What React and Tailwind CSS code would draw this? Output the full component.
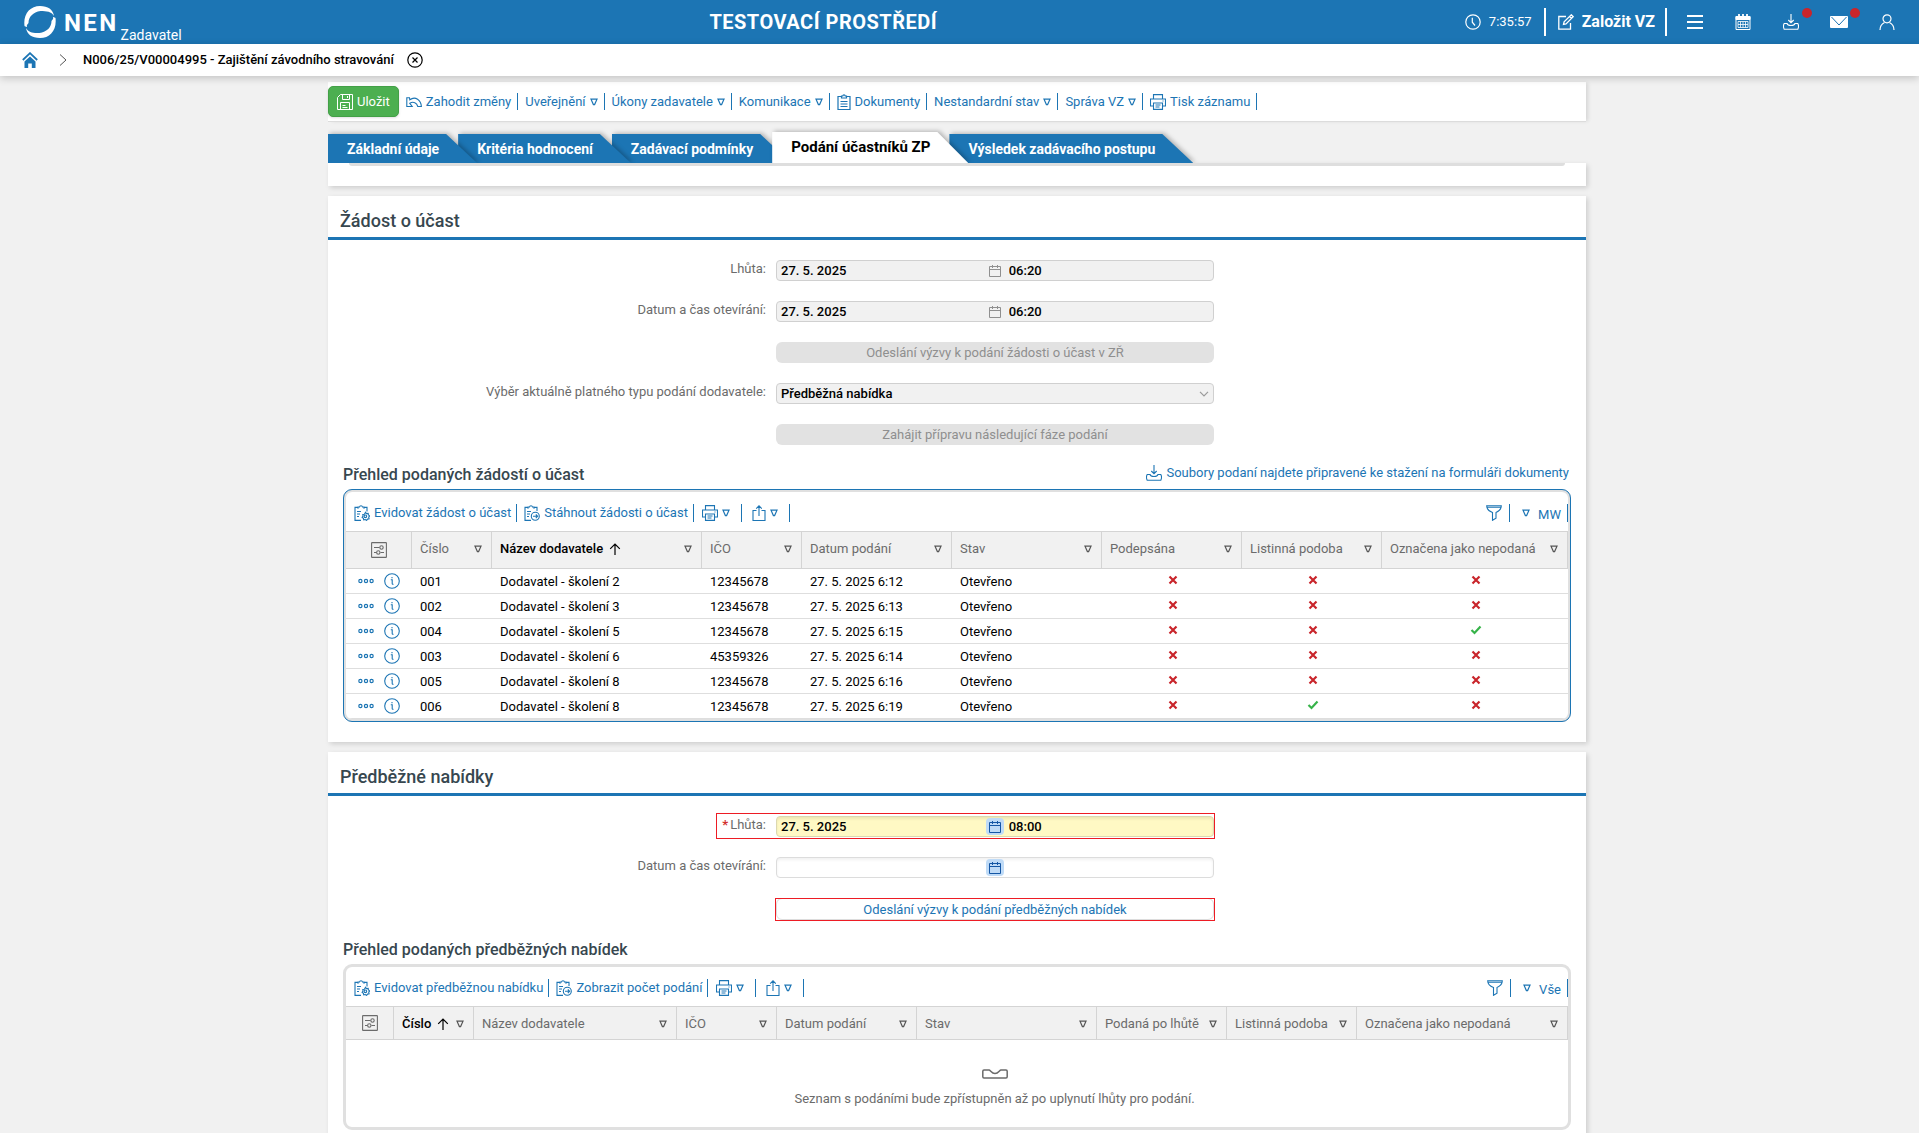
import React from 'react';

const Svg = ({ w = 16, h = 16, box, children, className = '', sw = 1 }) => (
  <svg
    width={w}
    height={h}
    viewBox={box || `0 0 ${w} ${h}`}
    fill="none"
    stroke="currentColor"
    strokeWidth={sw}
    aria-hidden="true"
    className={`shrink-0 ${className}`}
  >
    {children}
  </svg>
);

const Tri = () => (
  <Svg w={8} h={8} sw={1.2}>
    <path d="M1 1.2h6L4.6 6.6h-1.2z" />
  </Svg>
);

const LogoIcon = () => (
  <Svg w={32} h={32} box="0 0 32 32" sw={0}>
    <path
      fill="#fff"
      fillRule="evenodd"
      d="M16 0C24 0 29 3.500 30 10C27.500 5.500 22.500 5 16.500 5C9 6 4.500 11 4.500 17C3 19 1.500 21 .5 20C-1 8 6 0 16 0Z"
    />
    <path
      fill="#fff"
      d="M16 32C8 32 3 28.500 2 22C4.500 26.500 9.500 27.500 15.500 27C23 26 27.500 21 27.500 15C29 13 30.500 11 31.500 12C33 24 26 32 16 32Z"
    />
    <path stroke="#fff" strokeWidth="1.300" d="M2.200 21C1.500 11 7 4.500 16 4.200M29.800 11C30.500 21 25 27.500 16 27.800" />
  </Svg>
);

const HomeIcon = () => (
  <Svg className="text-[#1c75b4]" sw={1.8}>
    <path d="M.8 8 8 1.200l7.200 6.800" />
    <path d="M2.500 9.500 8 4.500l5.500 5V16H9.800v-4.500H6.200V16H2.500z" fill="currentColor" stroke="none" />
  </Svg>
);

const ChevronRight = () => (
  <Svg w={8} h={12} className="text-[#555]">
    <path d="m1 .5 6 5.500-6 5.500" />
  </Svg>
);

const SaveIcon = () => (
  <Svg>
    <path d="M3.500.5h12v15H.5v-12z" />
    <path d="M5.500.5v5h7v-5M10.500 2v2M3.500 15.500v-7h9v7M5.500 11.500h3M5.500 13.500h5" />
  </Svg>
);

const UndoIcon = () => (
  <Svg sw={1.1}>
    <path d="M3.500 3.700H.8v8.800h5.400L3.800 9.300C7.500 7 10.800 9 11.800 12.500h3.600C15 6.500 9.500 1.500 3.800 5.800z" />
  </Svg>
);

const DocIcon = () => (
  <Svg w={14} sw={1.2}>
    <path d="M4 2.500H1v13h12v-13h-3" />
    <path d="M4.500 4V2h1.200C6 .4 8 .4 8.300 2h1.200v2z" />
    <path d="M3.500 7.500h7M3.500 10h7M3.500 12.500h7" />
  </Svg>
);

const PrintIcon = () => (
  <Svg sw={1.1}>
    <path d="M3.500 5V.6h9V5M3.500 12h-3V5h15v7h-3" />
    <path d="M3.500 9h9v6.400h-9zM5.500 11h5M5.500 13h4M12.500 7h1" />
  </Svg>
);

const ShareIcon = () => (
  <Svg w={14} sw={1.1}>
    <path d="M4.500 5.500H1v10h12v-10H9.500M7 11V1M4.200 3.600 7 .8l2.800 2.800" />
  </Svg>
);

const ClipGear = () => (
  <Svg sw={1.1}>
    <path d="M7 15.400H1v-13h2.500M10.500 2.400h2.500v4M4 3.700V2h1.500C5.800.3 8.200.3 8.500 2H10v1.700M3 6.500h4M3 9h3M3 11.500h2" />
    <path d="m11.500 7.300 1 1.300 1.700-.2.200 1.600 1.300.9-1 1.300.4 1.600-1.600.3-.9 1.300-1.300-.9-1.600.4-.3-1.600-1.300-1 .9-1.300-.2-1.600 1.600-.2z" />
    <circle cx="11.400" cy="11.300" r="1.300" />
  </Svg>
);

const ClipArrow = () => (
  <Svg sw={1.1}>
    <path d="M7 15.400H1v-13h2.500M10.500 2.400h2.500v3.500M4 3.700V2h1.500C5.800.3 8.200.3 8.500 2H10v1.700M3 6.500h4M3 9h3M3 11.500h2" />
    <circle cx="11.300" cy="11.300" r="4" />
    <path d="M9 11.300h4.400M11.800 9.500l1.800 1.800-1.800 1.800" />
  </Svg>
);

const Funnel = () => (
  <Svg sw={1.1}>
    <path d="M.7.800h14.600c0 3.200-2.500 5.500-5.300 6.700v5.800l-3.500 2V7.500C3.200 6.300.7 4 .7.800zM1.200 2.200h13.600" />
  </Svg>
);

const Download = () => (
  <Svg sw={1.1}>
    <path d="M8 0v8.500M5.300 6 8 8.700 10.700 6" />
    <path d="M4 9.500H1.200c-.8 1.300-.8 4 0 5.800h13.600c.8-1.800.8-4.500 0-5.800H12c-.8 2.700-7.200 2.700-8 0z" />
  </Svg>
);

const DateIcon = () => (
  <Svg w={12} h={12} sw={1}>
    <path d="M.5 1.500h11v10H.5zM.5 4.500h11M3.500 0v3M8.500 0v3" />
  </Svg>
);

const Columns = () => (
  <Svg sw={1.1}>
    <rect x=".6" y=".6" width="14.800" height="14.800" rx=".5" />
    <path d="M3 5.500h5.500M3 10.500h2.500M9.500 10.500H13" />
    <circle cx="10.500" cy="5.500" r="1.700" />
    <circle cx="7.300" cy="10.500" r="1.700" />
  </Svg>
);

const SortUp = () => (
  <Svg w={12} h={12} sw={1.2}>
    <path d="M6 12V1M1.200 5.800 6 1l4.800 4.800" />
  </Svg>
);

const Dots = () => (
  <Svg w={16} h={6} sw={1.2}>
    <circle cx="2.400" cy="3" r="1.600" />
    <circle cx="8" cy="3" r="1.600" />
    <circle cx="13.600" cy="3" r="1.600" />
  </Svg>
);

const Info = () => (
  <Svg sw={1.1}>
    <circle cx="8" cy="8" r="7.300" />
    <path d="M6.800 6.800h1.400v3.700c0 .8.500.9 1.300.7M8 4v1.300" />
  </Svg>
);

const Cross = () => (
  <Svg w={10} h={10} sw={2.2} className="text-[#c9252b]">
    <path d="m1.500 1.500 7 7M8.500 1.500l-7 7" />
  </Svg>
);

const Check = () => (
  <Svg w={12} h={10} sw={2.2} className="text-[#37b34a]">
    <path d="m1.500 5 3 3 6-6.500" />
  </Svg>
);

const Sep = ({ tall }) => <span className={`w-px shrink-0 bg-[#1c75b4] ${tall ? 'h-[18px]' : 'h-[17px]'}`} />;

const HeaderIcon = ({ label, dot, children }) => (
  <button type="button" aria-label={label} className="relative flex h-9 w-12 items-center justify-center">
    {children}
    {dot && <span className="absolute right-[3px] top-1 size-[10px] rounded-full bg-[#c9252b]" />}
  </button>
);

const Header = () => (
  <header className="flex h-11 shrink-0 bg-[#1c75b4] text-white">
    <a href="#uvod" className="flex items-start pl-6 pt-[6px]">
      <LogoIcon />
      <span className="ml-2 text-2xl font-bold leading-[34px] tracking-widest">NEN</span>
      <span className="ml-[2px] mt-5 text-sm leading-[18px]">Zadavatel</span>
    </a>
    <div className="flex-1 self-center text-center text-xl font-bold tracking-wide">TESTOVACÍ PROSTŘEDÍ</div>
    <div className="flex items-center justify-end pr-2">
      <Svg sw={1.2}>
        <circle cx="8" cy="8" r="7.200" />
        <path d="M7.300 3.800v4.400l2.700 3.300" />
      </Svg>
      <span className="ml-2 text-[13px]">7:35:57</span>
      <span className="ml-3 h-7 w-[2px] bg-white" />
      <button type="button" className="flex items-center gap-2 pl-3 pr-[10px] text-base font-bold">
        <Svg sw={1.3}>
          <path d="M8 2.500H.8v12.700h11.700V9" />
          <path d="m5.500 10.500.6-2.700L13.300.8l1.900 1.900L8 9.900zM11.500 2.500l1.900 1.900" />
        </Svg>
        Založit VZ
      </button>
      <span className="mr-1 h-7 w-[2px] bg-white" />
      <HeaderIcon label="Menu">
        <Svg sw={2}>
          <path d="M0 2h16M0 8h16M0 14h16" />
        </Svg>
      </HeaderIcon>
      <HeaderIcon label="Kalendář">
        <Svg sw={1}>
          <path d="M1 2.500h14v13H1zM1 4h14M1 5h14" />
          <path d="M1 2.500h14v3H1z" fill="currentColor" />
          <path d="M4 0v3.500M8 0v3.500M12 0v3.500" strokeWidth="1.800" />
          <path d="M3 7.500h10v6H3zM3 10.500h10M5.500 7.500v6M8 7.500v6M10.500 7.500v6" strokeWidth=".8" />
        </Svg>
      </HeaderIcon>
      <HeaderIcon label="Stahování" dot>
        <Download />
      </HeaderIcon>
      <HeaderIcon label="Zprávy" dot>
        <Svg w={18} h={12}>
          <rect width="18" height="12" rx="1" fill="#fff" stroke="none" />
          <path d="m1.500 1 7.500 8 7.500-8" stroke="#1c75b4" />
        </Svg>
      </HeaderIcon>
      <HeaderIcon label="Uživatel">
        <Svg sw={1.2}>
          <circle cx="8" cy="4.800" r="4" />
          <path d="M1 16c0-4 2.500-6.500 4.500-7.500M15 16c0-4-2.500-6.500-4.500-7.500" />
        </Svg>
      </HeaderIcon>
    </div>
  </header>
);

const Breadcrumb = () => (
  <nav className="relative z-10 flex h-8 shrink-0 items-center bg-white pl-[22px] shadow-[0_2px_8px_rgba(0,0,0,0.2)]">
    <a href="#domu" aria-label="Domů">
      <HomeIcon />
    </a>
    <span className="ml-[21px] mr-4">
      <ChevronRight />
    </span>
    <span className="text-[13px] font-medium">N006/25/V00004995 - Zajištění závodního stravování</span>
    <button type="button" aria-label="Zavřít" className="ml-[13px]">
      <Svg sw={1.2}>
        <circle cx="8" cy="8" r="7.200" />
        <path d="m5.500 5.500 5 5M10.500 5.500l-5 5" />
      </Svg>
    </button>
  </nav>
);

const ToolItem = ({ icon, label, menu }) => (
  <>
    <button type="button" className="flex items-center gap-1 whitespace-nowrap pl-[7px] pr-[6px]">
      {icon}
      {label}
      {menu && <Tri />}
    </button>
    <Sep />
  </>
);

const MainToolbar = () => (
  <div className="flex h-10 items-center border-b border-[#dcdcdc] bg-white text-[13px] text-[#1c75b4] shadow-[3px_0_4px_-1px_rgba(0,0,0,0.12)]">
    <button
      type="button"
      className="flex h-[31px] items-center gap-1 rounded-[5px] border border-[#43a047] bg-[#4caf50] px-2 text-white shadow-sm"
    >
      <SaveIcon />
      Uložit
    </button>
    <ToolItem icon={<UndoIcon />} label="Zahodit změny" />
    <ToolItem label="Uveřejnění" menu />
    <ToolItem label="Úkony zadavatele" menu />
    <ToolItem label="Komunikace" menu />
    <ToolItem icon={<DocIcon />} label="Dokumenty" />
    <ToolItem label="Nestandardní stav" menu />
    <ToolItem label="Správa VZ" menu />
    <ToolItem icon={<PrintIcon />} label="Tisk záznamu" />
  </div>
);

const TABS = [
  ['Základní údaje', 'z-40'],
  ['Kritéria hodnocení', 'z-30'],
  ['Zadávací podmínky', 'z-20'],
  ['Podání účastníků ZP', 'z-50', true],
  ['Výsledek zadávacího postupu', 'z-10'],
];

const Tabs = () => (
  <div role="tablist" className="relative z-0 flex h-[41px] items-end overflow-hidden text-sm font-bold">
    {TABS.map(([label, z, active]) => (
      <button
        key={label}
        type="button"
        role="tab"
        aria-selected={!!active}
        className={`relative whitespace-nowrap px-[19px] ${z} ${active ? 'h-[31px] text-[15px] text-black' : 'h-[29px] text-white'}`}
      >
        <span className="absolute inset-y-0 left-0 -right-[19px] drop-shadow-[2px_-1px_2px_rgba(0,0,0,0.25)]">
          <span
            className={`block size-full [clip-path:polygon(0_0,calc(100%-31px)_0,100%_100%,0_100%)] ${active ? 'bg-white' : 'bg-[#1c75b4]'}`}
          />
        </span>
        <span className="relative">{label}</span>
      </button>
    ))}
  </div>
);

const CARD = 'bg-white shadow-[2px_2px_5px_rgba(0,0,0,0.15)]';

const SectionTitle = ({ children }) => (
  <h2 className="flex h-11 items-center border-b-[3px] border-[#1c75b4] px-3 pt-2 text-lg font-medium text-[#37474f]">
    {children}
  </h2>
);

const Row = ({ id, label, required, children }) => (
  <div className="grid grid-cols-[448fr_438fr_372fr]">
    <div className="pr-[10px] text-right text-[13px] leading-[18px] text-[#6b6b6b]">
      {label && (
        <label htmlFor={id}>
          {required && <span className="mr-[2px] font-bold text-[#d32f2f]">*</span>}
          {label}
        </label>
      )}
    </div>
    <div className="relative">{children}</div>
  </div>
);

const Highlight = ({ wide }) => (
  <span
    aria-hidden="true"
    className={`pointer-events-none absolute -right-px border border-[#ed1c24] ${wide ? '-bottom-[2px] -left-[60px] -top-[3px]' : '-bottom-px -left-px top-0'}`}
  />
);

const DateField = ({ id, date, time, tone }) => {
  const box = {
    locked: 'border-[#d0d0d0] bg-[#f1f1f1]',
    required: 'border-[#dcd8b0] bg-[#fff9c4] shadow-[inset_0_2px_3px_rgba(0,0,0,0.08)]',
    open: 'border-[#dcdcdc] bg-white shadow-[inset_0_2px_3px_rgba(0,0,0,0.06)]',
  }[tone];
  return (
    <div className={`flex h-[21px] items-center rounded-[4px] border text-[13px] font-medium ${box}`}>
      <div className="flex w-[52%] items-center">
        <input id={id} defaultValue={date} readOnly={tone === 'locked'} className="min-w-0 flex-1 bg-transparent pl-1 outline-none" />
        <button
          type="button"
          aria-label="Vybrat datum"
          className={`flex h-[17px] w-[18px] items-center justify-center rounded-[4px] ${tone === 'locked' ? 'text-[#8f8f8f]' : 'bg-[#bfdbf7] text-[#1557a5]'}`}
        >
          <DateIcon />
        </button>
      </div>
      <input
        aria-label="Čas"
        defaultValue={time}
        readOnly={tone === 'locked'}
        className="min-w-0 flex-1 bg-transparent pl-[5px] outline-none"
      />
    </div>
  );
};

const GreyButton = ({ children }) => (
  <button type="button" disabled className="flex h-[21px] w-full items-center justify-center rounded-[6px] bg-[#e2e2e2] text-[13px] text-[#8f8f8f]">
    {children}
  </button>
);

const GridToolbar = ({ first, second, view }) => (
  <div className="flex h-[39px] items-center pt-[2px] text-[13px] text-[#1c75b4]">
    <button type="button" className="flex items-center gap-1 pl-2 pr-[5px]">
      <ClipGear />
      {first}
    </button>
    <Sep tall />
    <button type="button" className="flex items-center gap-1 pl-[7px] pr-[5px]">
      <ClipArrow />
      {second}
    </button>
    <Sep tall />
    <button type="button" aria-label="Tisk" className="flex items-center gap-1 pl-2 pr-[11px]">
      <PrintIcon />
      <Tri />
    </button>
    <Sep tall />
    <button type="button" aria-label="Export" className="flex items-center gap-1 pl-[10px] pr-[11px]">
      <ShareIcon />
      <Tri />
    </button>
    <Sep tall />
    <button type="button" aria-label="Filtr" className="ml-auto px-[7px]">
      <Funnel />
    </button>
    <Sep tall />
    <button type="button" className="flex items-center gap-2 pl-3 pr-[6px]">
      <Tri />
      <span className="pt-1">{view}</span>
    </button>
    <Sep tall />
  </div>
);

const DataGrid = ({ columns, sorted, tall, children }) => (
  <table className="w-full table-fixed border-separate border-spacing-0 text-left text-[13px]">
    <colgroup>
      {columns.map(([name, width]) => (
        <col key={name} style={{ width: `${(width / 1222) * 100}%` }} />
      ))}
    </colgroup>
    <thead>
      <tr className={tall ? 'h-[38px]' : 'h-[34px]'}>
        {columns.map(([name], i) => (
          <th
            key={name}
            scope="col"
            className={`whitespace-nowrap border-y border-r border-[#d4d4d4] bg-[#f1f1f1] p-0 ${name === sorted ? 'font-medium text-black' : 'font-normal text-[#6b6b6b]'}`}
          >
            {i === 0 ? (
              <button type="button" aria-label={name} className="mx-auto flex">
                <Columns />
              </button>
            ) : (
              <span className={`flex items-center pl-2 pr-[9px] ${tall ? 'pb-[2px]' : 'pt-px'}`}>
                {name}
                {name === sorted && (
                  <span className="ml-[6px]">
                    <SortUp />
                  </span>
                )}
                <button type="button" aria-label={`Filtr: ${name}`} className="ml-auto text-[#555]">
                  <Tri />
                </button>
              </span>
            )}
          </th>
        ))}
      </tr>
    </thead>
    <tbody>{children}</tbody>
  </table>
);

const COLS_A = [
  ['Nastavení sloupců', 66],
  ['Číslo', 80],
  ['Název dodavatele', 210],
  ['IČO', 100],
  ['Datum podání', 150],
  ['Stav', 150],
  ['Podepsána', 140],
  ['Listinná podoba', 140],
  ['Označena jako nepodaná', 186],
];

const COLS_B = [
  ['Nastavení sloupců', 48],
  ['Číslo', 80],
  ['Název dodavatele', 203],
  ['IČO', 100],
  ['Datum podání', 140],
  ['Stav', 180],
  ['Podaná po lhůtě', 130],
  ['Listinná podoba', 130],
  ['Označena jako nepodaná', 211],
];

const ROWS = [
  ['001', 'Dodavatel - školení 2', '12345678', '27. 5. 2025 6:12', false, false, false],
  ['002', 'Dodavatel - školení 3', '12345678', '27. 5. 2025 6:13', false, false, false],
  ['004', 'Dodavatel - školení 5', '12345678', '27. 5. 2025 6:15', false, false, true],
  ['003', 'Dodavatel - školení 6', '45359326', '27. 5. 2025 6:14', false, false, false],
  ['005', 'Dodavatel - školení 8', '12345678', '27. 5. 2025 6:16', false, false, false],
  ['006', 'Dodavatel - školení 8', '12345678', '27. 5. 2025 6:19', false, true, false],
];

const TD = 'border-b border-[#dedede]';
const TEXT_TD = 'border-b border-[#dedede] pb-0 pl-2 pr-0 pt-[2px]';

const Flag = ({ on }) => (
  <td className={`${TD} p-0`}>
    <span className="flex justify-center pb-[2px] pl-[2px]" role="img" aria-label={on ? 'Ano' : 'Ne'}>
      {on ? <Check /> : <Cross />}
    </span>
  </td>
);

const RequestSection = () => (
  <section className={`mt-[10px] pb-5 ${CARD}`}>
    <SectionTitle>Žádost o účast</SectionTitle>
    <div className="flex flex-col gap-5 pt-5">
      <Row id="a-lhuta" label="Lhůta:">
        <DateField id="a-lhuta" date="27. 5. 2025" time="06:20" tone="locked" />
      </Row>
      <Row id="a-otevirani" label="Datum a čas otevírání:">
        <DateField id="a-otevirani" date="27. 5. 2025" time="06:20" tone="locked" />
      </Row>
      <Row>
        <GreyButton>Odeslání výzvy k podání žádosti o účast v ZŘ</GreyButton>
      </Row>
      <Row id="a-typ" label="Výběr aktuálně platného typu podání dodavatele:">
        <select
          id="a-typ"
          className="block h-[21px] w-full appearance-none rounded-[4px] border border-[#d0d0d0] bg-[#f1f1f1] px-1 text-[13px] font-medium leading-[18px]"
        >
          <option>Předběžná nabídka</option>
        </select>
        <span className="pointer-events-none absolute right-[5px] top-2 text-[#9a9a9a]">
          <Svg w={10} h={6} sw={1.2}>
            <path d="m1 .8 4 4 4-4" />
          </Svg>
        </span>
      </Row>
      <Row>
        <GreyButton>Zahájit přípravu následující fáze podání</GreyButton>
      </Row>
    </div>
    <div className="mt-4 flex h-7 items-center justify-between px-[15px]">
      <h3 className="text-base font-medium text-[#37474f]">Přehled podaných žádostí o účast</h3>
      <a href="#dokumenty" className="flex items-center gap-1 pb-1 pr-[2px] text-[13px] text-[#1c75b4]">
        <Download />
        Soubory podaní najdete připravené ke stažení na formuláři dokumenty
      </a>
    </div>
    <div className="mx-[15px] overflow-hidden rounded-[9px] border-[3px] border-[#e0e0e0] outline outline-1 -outline-offset-1 outline-[#1c75b4]">
      <GridToolbar first="Evidovat žádost o účast" second="Stáhnout žádosti o účast" view="MW" />
      <DataGrid columns={COLS_A} sorted="Název dodavatele" tall>
        {ROWS.map(([num, name, ico, when, ...flags]) => (
          <tr key={num} className="h-[25px]">
            <td className={`${TD} p-0`}>
              <span className="flex items-center justify-center gap-[10px] text-[#1c75b4]">
                <button type="button" aria-label="Možnosti">
                  <Dots />
                </button>
                <button type="button" aria-label="Detail">
                  <Info />
                </button>
              </span>
            </td>
            <td className={TEXT_TD}>{num}</td>
            <td className={TEXT_TD}>{name}</td>
            <td className={TEXT_TD}>{ico}</td>
            <td className={TEXT_TD}>{when}</td>
            <td className={TEXT_TD}>Otevřeno</td>
            {flags.map((on, i) => (
              <Flag key={i} on={on} />
            ))}
          </tr>
        ))}
      </DataGrid>
    </div>
  </section>
);

const OffersSection = () => (
  <section className={`mt-[10px] pb-5 ${CARD}`}>
    <SectionTitle>Předběžné nabídky</SectionTitle>
    <div className="flex flex-col gap-5 pt-5">
      <Row id="b-lhuta" label="Lhůta:" required>
        <DateField id="b-lhuta" date="27. 5. 2025" time="08:00" tone="required" />
        <Highlight wide />
      </Row>
      <Row id="b-otevirani" label="Datum a čas otevírání:">
        <DateField id="b-otevirani" date="" time="" tone="open" />
      </Row>
      <Row>
        <button
          type="button"
          className="flex h-[22px] w-full items-center justify-center rounded-[6px] border border-[#dcdcdc] bg-white pt-[2px] text-[13px] text-[#1c75b4]"
        >
          Odeslání výzvy k podání předběžných nabídek
        </button>
        <Highlight />
      </Row>
    </div>
    <div className="mt-4 flex h-7 items-center px-[15px]">
      <h3 className="text-base font-medium text-[#37474f]">Přehled podaných předběžných nabídek</h3>
    </div>
    <div className="mx-[15px] overflow-hidden rounded-[9px] border-[3px] border-[#e0e0e0]">
      <GridToolbar first="Evidovat předběžnou nabídku" second="Zobrazit počet podání" view="Vše" />
      <DataGrid columns={COLS_B} sorted="Číslo">
        <tr className="h-[87px]">
          <td colSpan={9} className="p-0">
            <span className="flex flex-col items-center gap-[10px] pl-[75px] pt-[10px] text-[#6b6b6b]">
              <Svg w={26} h={10} sw={1.5}>
                <path d="M2 1h5c1.500 0 2.500 3.500 6 3.500S17.500 1 19 1h5c.8 0 1.200.5 1.200 1.200v5.600c0 .7-.4 1.200-1.200 1.200H2c-.8 0-1.200-.5-1.200-1.200V2.200C.8 1.500 1.200 1 2 1z" />
              </Svg>
              Seznam s podáními bude zpřístupněn až po uplynutí lhůty pro podání.
            </span>
          </td>
        </tr>
      </DataGrid>
    </div>
  </section>
);

export default function App() {
  return (
    <div className="flex h-screen flex-col overflow-hidden bg-[#f1f1f1] font-[Roboto,sans-serif] text-black">
      <Header />
      <Breadcrumb />
      <main className="min-h-0 flex-1 overflow-hidden pr-[5px] pt-[6px]">
        <div className="mx-auto w-full max-w-[1258px]">
          <MainToolbar />
          <Tabs />
          <div className={`h-[23px] px-[21px] ${CARD}`}>
            <div className="h-[3px] rounded-b-[3px] bg-[#dedede]" />
          </div>
          <RequestSection />
          <OffersSection />
        </div>
      </main>
    </div>
  );
}
